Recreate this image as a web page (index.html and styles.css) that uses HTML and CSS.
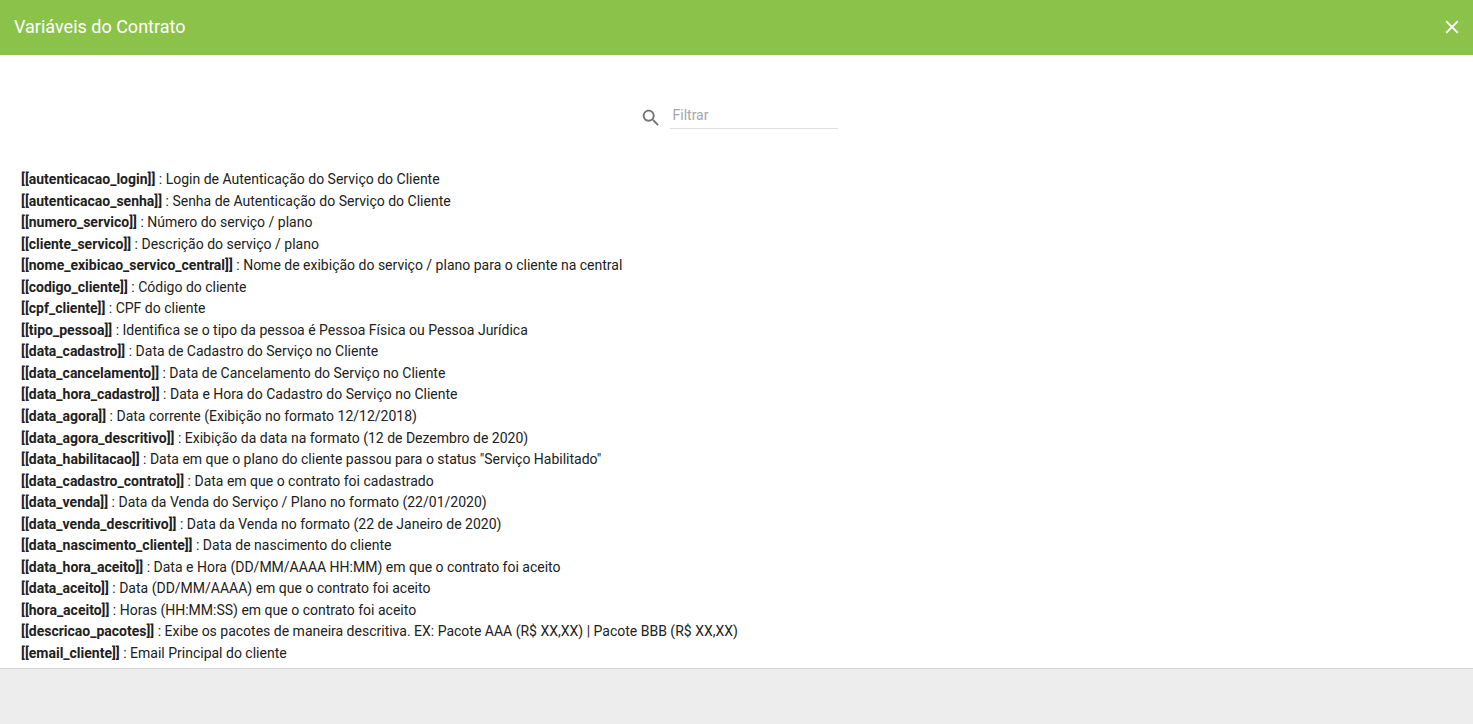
FILE: index.html
```html
<!DOCTYPE html>
<html lang="pt-BR">
<head>
    <meta charset="UTF-8">
    <meta name="viewport" content="width=device-width, initial-scale=1.0">
    <title>Variáveis do Contrato</title>
    <link rel="stylesheet" href="styles.css">
</head>
<body>

    <div class="dialog">
        <header class="toolbar">
            <h1>Variáveis do Contrato</h1>
            <button class="close" type="button" aria-label="Fechar">
                <svg viewBox="0 0 24 24"><path d="M19 6.41L17.59 5 12 10.59 6.41 5 5 6.41 10.59 12 5 17.59 6.41 19 12 13.41 17.59 19 19 17.59 13.41 12z"/></svg>
            </button>
        </header>

        <main class="content">
            <!-- Filter -->
            <div class="filter">
                <label for="filtrar" aria-label="Filtrar">
                    <svg viewBox="0 0 24 24"><path d="M15.5 14h-.79l-.28-.27C15.41 12.59 16 11.11 16 9.5 16 5.91 13.09 3 9.5 3S3 5.91 3 9.5 5.91 16 9.5 16c1.61 0 3.09-.59 4.23-1.57l.27.28v.79l5 4.99L20.49 19l-4.99-5zm-6 0C7.01 14 5 11.99 5 9.5S7.01 5 9.5 5 14 7.01 14 9.5 11.99 14 9.5 14z"/></svg>
                </label>
                <input type="text" id="filtrar" placeholder="Filtrar">
            </div>

            <!-- Variables -->
            <ul class="variables">
                <li><b>[[autenticacao_login]]</b> : Login de Autenticação do Serviço do Cliente</li>
                <li><b>[[autenticacao_senha]]</b> : Senha de Autenticação do Serviço do Cliente</li>
                <li><b>[[numero_servico]]</b> : Número do serviço / plano</li>
                <li><b>[[cliente_servico]]</b> : Descrição do serviço / plano</li>
                <li><b>[[nome_exibicao_servico_central]]</b> : Nome de exibição do serviço / plano para o cliente na central</li>
                <li><b>[[codigo_cliente]]</b> : Código do cliente</li>
                <li><b>[[cpf_cliente]]</b> : CPF do cliente</li>
                <li><b>[[tipo_pessoa]]</b> : Identifica se o tipo da pessoa é Pessoa Física ou Pessoa Jurídica</li>
                <li><b>[[data_cadastro]]</b> : Data de Cadastro do Serviço no Cliente</li>
                <li><b>[[data_cancelamento]]</b> : Data de Cancelamento do Serviço no Cliente</li>
                <li><b>[[data_hora_cadastro]]</b> : Data e Hora do Cadastro do Serviço no Cliente</li>
                <li><b>[[data_agora]]</b> : Data corrente (Exibição no formato 12/12/2018)</li>
                <li><b>[[data_agora_descritivo]]</b> : Exibição da data na formato (12 de Dezembro de 2020)</li>
                <li><b>[[data_habilitacao]]</b> : Data em que o plano do cliente passou para o status "Serviço Habilitado"</li>
                <li><b>[[data_cadastro_contrato]]</b> : Data em que o contrato foi cadastrado</li>
                <li><b>[[data_venda]]</b> : Data da Venda do Serviço / Plano no formato (22/01/2020)</li>
                <li><b>[[data_venda_descritivo]]</b> : Data da Venda no formato (22 de Janeiro de 2020)</li>
                <li><b>[[data_nascimento_cliente]]</b> : Data de nascimento do cliente</li>
                <li><b>[[data_hora_aceito]]</b> : Data e Hora (DD/MM/AAAA HH:MM) em que o contrato foi aceito</li>
                <li><b>[[data_aceito]]</b> : Data (DD/MM/AAAA) em que o contrato foi aceito</li>
                <li><b>[[hora_aceito]]</b> : Horas (HH:MM:SS) em que o contrato foi aceito</li>
                <li><b>[[descricao_pacotes]]</b> : Exibe os pacotes de maneira descritiva. EX: Pacote AAA (R$ XX,XX) | Pacote BBB (R$ XX,XX)</li>
                <li><b>[[email_cliente]]</b> : Email Principal do cliente</li>
            </ul>
        </main>

        <footer class="actions"></footer>
    </div>

</body>
</html>
```

FILE: styles.css
```css
body {
    margin: 0;
    font-family: Roboto, sans-serif;
    color: #212121;
    background-color: #fff;
}
.dialog {
    display: flex;
    flex-direction: column;
    height: 100vh;
}
.toolbar {
    display: flex;
    justify-content: space-between;
    align-items: center;
    flex: none;
    box-sizing: border-box;
    height: 55px;
    padding: 0 10px 3px 14px;
    background-color: #8bc34a;
    color: #fff;
}
.toolbar h1 {
    margin: 0;
    font-size: 18px;
    font-weight: 400;
}
.close {
    padding: 2px 0 0;
    border: none;
    background: none;
    color: inherit;
    cursor: pointer;
}
svg {
    display: block;
    width: 22px;
    height: 22px;
    fill: currentColor;
}
.content {
    flex: 1;
    min-height: 0;
    overflow: hidden;
    padding: 0 21px;
}
.filter {
    display: flex;
    justify-content: center;
    align-items: center;
    gap: 8px;
    padding: 47px 0 39px 4px;
}
.filter label {
    padding-top: 4px;
    color: #757575;
}
.filter input {
    box-sizing: border-box;
    width: 168px;
    height: 27px;
    padding: 0 3px;
    border: none;
    border-bottom: 1px solid #e0e0e0;
    outline: none;
    font-family: inherit;
    font-size: 14px;
}
.filter input::placeholder {
    color: #a6a6a6;
}
.variables {
    margin: 0;
    padding: 1px 0 0;
    list-style: none;
    font-size: 14px;
    line-height: 1.54;
}
.actions {
    flex: none;
    height: 55px;
    border-top: 1px solid #d4d4d4;
    background-color: #ededed;
}
```
